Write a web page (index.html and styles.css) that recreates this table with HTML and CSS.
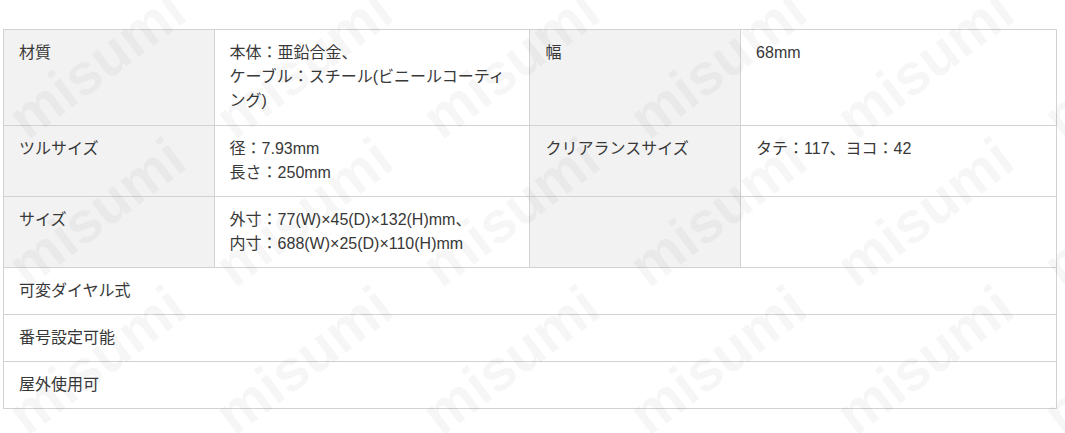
FILE: index.html
```html
<!DOCTYPE html>
<html lang="ja">
<head>
<meta charset="utf-8">
<title>仕様</title>
<link rel="stylesheet" href="styles.css">
</head>
<body>
<table class="spec">
  <colgroup>
    <col class="c-label">
    <col class="c-value">
    <col class="c-label">
    <col class="c-value">
  </colgroup>
  <tbody>
    <tr class="tall">
      <th>材質</th>
      <td>本体：亜鉛合金、<br>ケーブル：スチール(ビニールコーティング)</td>
      <th>幅</th>
      <td>68mm</td>
    </tr>
    <tr>
      <th>ツルサイズ</th>
      <td>径：7.93mm<br>長さ：250mm</td>
      <th>クリアランスサイズ</th>
      <td>タテ：117、ヨコ：42</td>
    </tr>
    <tr>
      <th>サイズ</th>
      <td>外寸：77(W)×45(D)×132(H)mm、<br>内寸：688(W)×25(D)×110(H)mm</td>
      <th></th>
      <td></td>
    </tr>
    <tr><td class="full" colspan="4">可変ダイヤル式</td></tr>
    <tr><td class="full" colspan="4">番号設定可能</td></tr>
    <tr><td class="full" colspan="4">屋外使用可</td></tr>
  </tbody>
</table>

<div class="watermark" aria-hidden="true">
  <span>misumi</span><span>misumi</span><span>misumi</span><span>misumi</span><span>misumi</span><span>misumi</span>
  <span>misumi</span><span>misumi</span><span>misumi</span><span>misumi</span><span>misumi</span><span>misumi</span>
  <span>misumi</span><span>misumi</span><span>misumi</span><span>misumi</span><span>misumi</span><span>misumi</span>
  <span>misumi</span><span>misumi</span><span>misumi</span><span>misumi</span><span>misumi</span><span>misumi</span>
</div>
</body>
</html>
```

FILE: styles.css
```css
html, body {
  margin: 0;
  padding: 0;
  background: #fff;
}

body {
  font-family: "Liberation Sans", "Noto Sans CJK JP", sans-serif;
  font-size: 16px;
  line-height: 24px;
  color: #383838;
  width: 1065px;
  height: 433px;
  overflow: hidden;
}

.spec {
  width: 1054px;
  margin: 29px 0 0 3px;
  border-collapse: collapse;
  table-layout: fixed;
}

.c-label { width: 20%; }
.c-value { width: 30%; }

.spec th,
.spec td {
  border: 1px solid #d2d2d2;
  padding: 11px 15px;
  text-align: left;
  vertical-align: top;
  font-weight: normal;
}

.spec .tall th,
.spec .tall td {
  padding-bottom: 12px;
}

.spec th {
  background: #f2f2f2;
}

.spec td {
  background: #fff;
}

.watermark {
  position: fixed;
  left: -7px;
  top: -10px;
  display: grid;
  grid-template-columns: repeat(6, 207px);
  grid-auto-rows: 148px;
  pointer-events: none;
}

.watermark span {
  display: flex;
  align-items: center;
  justify-content: center;
  transform: rotate(-37deg);
  font-family: "Liberation Sans", sans-serif;
  font-weight: bold;
  font-size: 58px;
  line-height: 1;
  color: rgba(0, 0, 0, 0.034);
}
```
